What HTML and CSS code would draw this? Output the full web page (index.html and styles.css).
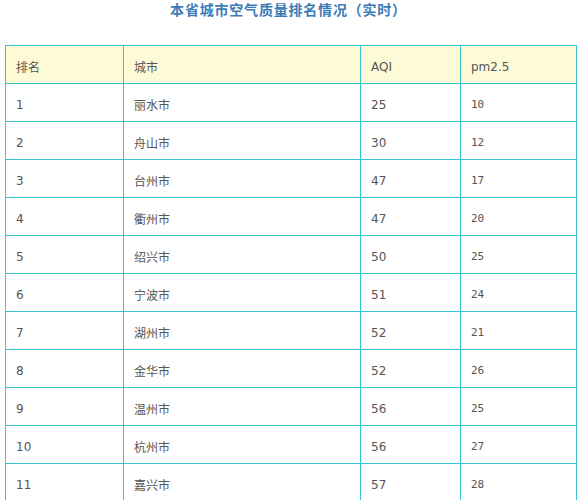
FILE: index.html
```html
<!DOCTYPE html>
<html lang="zh-CN">
<head>
<meta charset="utf-8">
<title>本省城市空气质量排名情况（实时）</title>
<link rel="stylesheet" href="styles.css">
</head>
<body>
<h1 class="title">本省城市空气质量排名情况（实时）</h1>
<table class="rank">
  <colgroup>
    <col class="c-rank">
    <col class="c-city">
    <col class="c-aqi">
    <col class="c-pm">
  </colgroup>
  <thead>
    <tr><th>排名</th><th>城市</th><th>AQI</th><th>pm2.5</th></tr>
  </thead>
  <tbody>
    <tr><td>1</td><td>丽水市</td><td>25</td><td class="pm">10</td></tr>
    <tr><td>2</td><td>舟山市</td><td>30</td><td class="pm">12</td></tr>
    <tr><td>3</td><td>台州市</td><td>47</td><td class="pm">17</td></tr>
    <tr><td>4</td><td>衢州市</td><td>47</td><td class="pm">20</td></tr>
    <tr><td>5</td><td>绍兴市</td><td>50</td><td class="pm">25</td></tr>
    <tr><td>6</td><td>宁波市</td><td>51</td><td class="pm">24</td></tr>
    <tr><td>7</td><td>湖州市</td><td>52</td><td class="pm">21</td></tr>
    <tr><td>8</td><td>金华市</td><td>52</td><td class="pm">26</td></tr>
    <tr><td>9</td><td>温州市</td><td>56</td><td class="pm">25</td></tr>
    <tr><td>10</td><td>杭州市</td><td>56</td><td class="pm">27</td></tr>
    <tr><td>11</td><td>嘉兴市</td><td>57</td><td class="pm">28</td></tr>
  </tbody>
</table>
</body>
</html>
```
FILE: styles.css
```css
html, body {
  margin: 0;
  padding: 0;
  background: #ffffff;
}

body {
  font-family: "DejaVu Sans", "Noto Sans CJK SC", sans-serif;
  overflow: hidden;
}

.title {
  margin: 0;
  height: 45px;
  padding: 0 6px 0 0;
  box-sizing: border-box;
  font-family: "Noto Sans CJK SC", sans-serif;
  font-size: 14px;
  line-height: 18px;
  letter-spacing: 0.8px;
  font-weight: bold;
  color: #3c7cb6;
  text-align: center;
}

.rank {
  margin-left: 5px;
  width: 572px;
  border-collapse: collapse;
  table-layout: fixed;
  font-size: 12px;
  color: #555555;
}

.c-rank { width: 118px; }
.c-city { width: 237px; }
.c-aqi  { width: 100px; }
.c-pm   { width: 116px; }

.rank th,
.rank td {
  border: 1px solid #34c4cd;
  height: 38px;
  padding: 4px 0 0 10px;
  box-sizing: border-box;
  text-align: left;
  font-weight: normal;
  vertical-align: middle;
  font-family: "DejaVu Sans", "Noto Sans CJK SC", sans-serif;
}

.rank th {
  background: #fdfbd6;
}

.rank td.pm {
  font-family: "DejaVu Sans Mono", "Liberation Mono", monospace;
  font-size: 11px;
}
```
